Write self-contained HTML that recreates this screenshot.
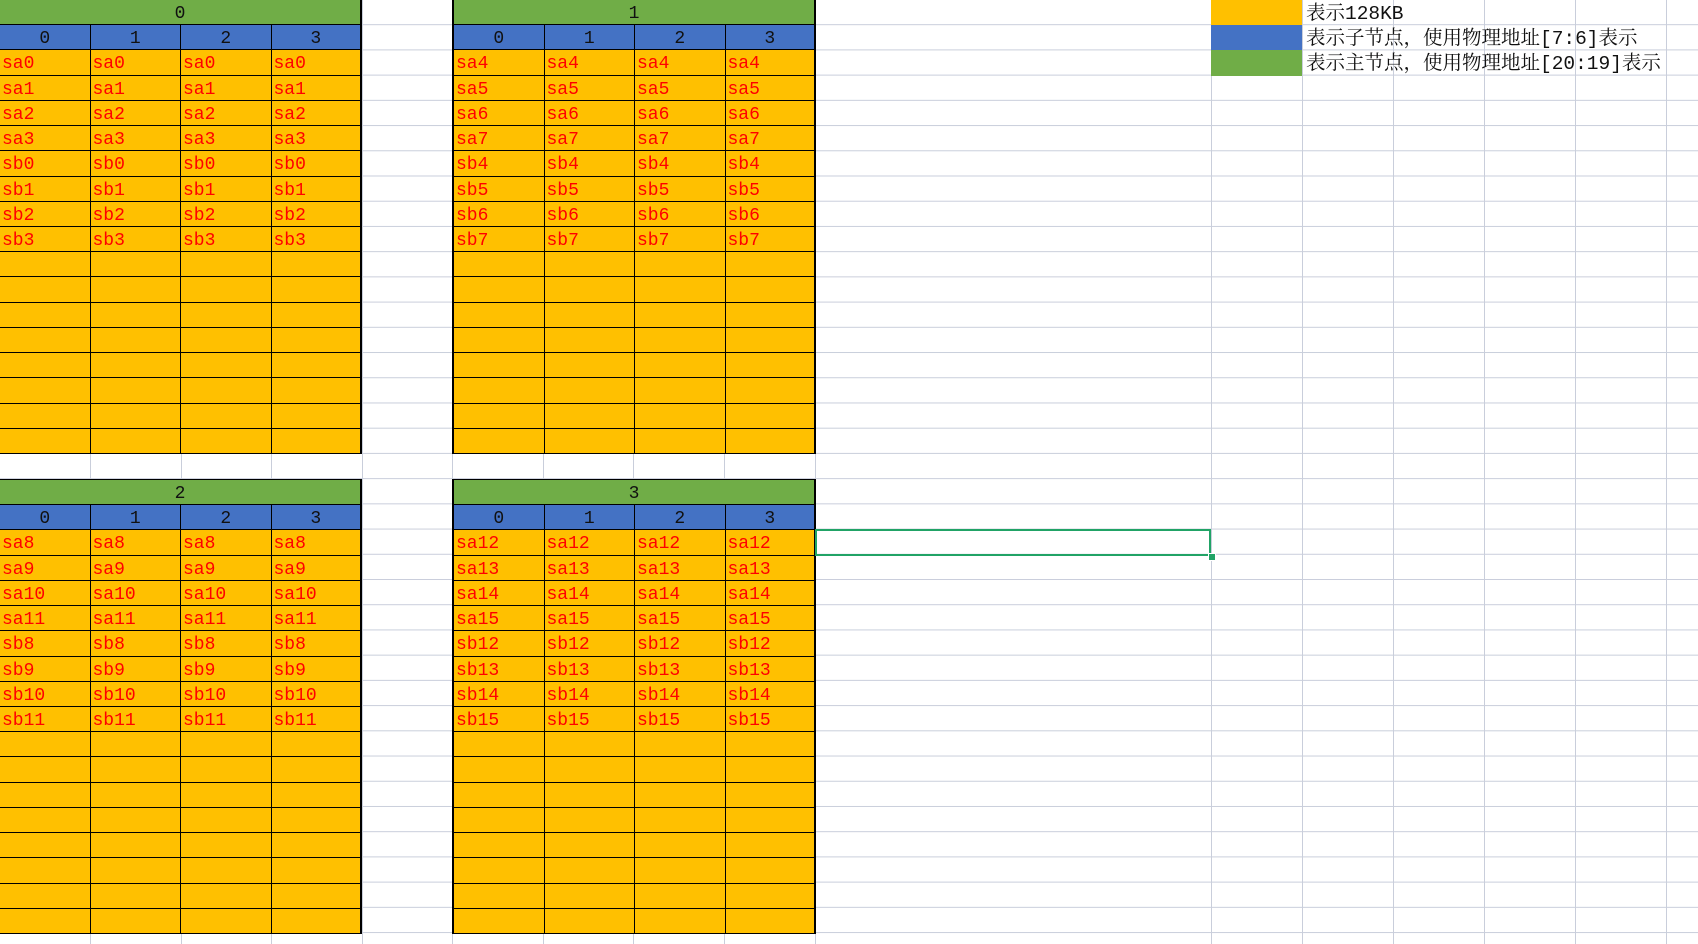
<!DOCTYPE html>
<html><head><meta charset="utf-8"><style>
body{margin:0;width:1698px;height:944px;overflow:hidden;position:relative;background:#fff;
background-image:linear-gradient(to bottom,#c9cedb 1px,transparent 1px);background-size:100% 25.22px;background-position:0 24.2px;
font-family:"Liberation Mono","Noto Serif CJK SC",serif;}
.v{position:absolute;top:0;width:1px;height:944px;background:#c9cedb}
.blk{position:absolute;width:362px;background:#FFC000;box-sizing:border-box;border-right:2px solid #000}
.r{display:grid;grid-template-columns:90.5px 90.5px 90.5px 88.5px;height:25.22px}
.r i{font-style:normal;box-sizing:border-box;border-right:1px solid #000;border-bottom:1px solid #000;color:#f00;font-size:18px;line-height:29px;padding-left:2px;white-space:nowrap;overflow:hidden}
.r i:last-child{border-right:none}
.g{height:25.22px;background:#70AD47;box-sizing:border-box;border-bottom:1px solid #000;text-align:center;font-size:18px;line-height:29px;color:#111}
.b{background:#4472C4}
.b i{color:#111;text-align:center;padding:0;line-height:29px}
.lg{position:absolute;left:1211px;width:91px;height:25.22px}
.lt{position:absolute;left:1306px;font-size:19.5px;line-height:28px;color:#111;white-space:nowrap;font-family:"Liberation Mono","Noto Serif CJK SC",serif}
</style></head><body>
<div class="v" style="left:90px"></div><div class="v" style="left:181px"></div><div class="v" style="left:271px"></div><div class="v" style="left:362px"></div><div class="v" style="left:452px"></div><div class="v" style="left:543px"></div><div class="v" style="left:633px"></div><div class="v" style="left:724px"></div><div class="v" style="left:815px"></div><div class="v" style="left:1211px"></div><div class="v" style="left:1302px"></div><div class="v" style="left:1393px"></div><div class="v" style="left:1484px"></div><div class="v" style="left:1575px"></div><div class="v" style="left:1666px"></div>

<div class="blk" style="left:0;top:0;height:454px">
<div class="g">0</div>
<div class="r b"><i>0</i><i>1</i><i>2</i><i>3</i></div>
<div class="r"><i>sa0</i><i>sa0</i><i>sa0</i><i>sa0</i></div>
<div class="r"><i>sa1</i><i>sa1</i><i>sa1</i><i>sa1</i></div>
<div class="r"><i>sa2</i><i>sa2</i><i>sa2</i><i>sa2</i></div>
<div class="r"><i>sa3</i><i>sa3</i><i>sa3</i><i>sa3</i></div>
<div class="r"><i>sb0</i><i>sb0</i><i>sb0</i><i>sb0</i></div>
<div class="r"><i>sb1</i><i>sb1</i><i>sb1</i><i>sb1</i></div>
<div class="r"><i>sb2</i><i>sb2</i><i>sb2</i><i>sb2</i></div>
<div class="r"><i>sb3</i><i>sb3</i><i>sb3</i><i>sb3</i></div>
<div class="r"><i></i><i></i><i></i><i></i></div><div class="r"><i></i><i></i><i></i><i></i></div><div class="r"><i></i><i></i><i></i><i></i></div><div class="r"><i></i><i></i><i></i><i></i></div><div class="r"><i></i><i></i><i></i><i></i></div><div class="r"><i></i><i></i><i></i><i></i></div><div class="r"><i></i><i></i><i></i><i></i></div><div class="r"><i></i><i></i><i></i><i></i></div>
</div>

<div class="blk" style="left:452px;top:0;height:454px;width:364px;border-left:2px solid #000">
<div class="g">1</div>
<div class="r b"><i>0</i><i>1</i><i>2</i><i>3</i></div>
<div class="r"><i>sa4</i><i>sa4</i><i>sa4</i><i>sa4</i></div>
<div class="r"><i>sa5</i><i>sa5</i><i>sa5</i><i>sa5</i></div>
<div class="r"><i>sa6</i><i>sa6</i><i>sa6</i><i>sa6</i></div>
<div class="r"><i>sa7</i><i>sa7</i><i>sa7</i><i>sa7</i></div>
<div class="r"><i>sb4</i><i>sb4</i><i>sb4</i><i>sb4</i></div>
<div class="r"><i>sb5</i><i>sb5</i><i>sb5</i><i>sb5</i></div>
<div class="r"><i>sb6</i><i>sb6</i><i>sb6</i><i>sb6</i></div>
<div class="r"><i>sb7</i><i>sb7</i><i>sb7</i><i>sb7</i></div>
<div class="r"><i></i><i></i><i></i><i></i></div><div class="r"><i></i><i></i><i></i><i></i></div><div class="r"><i></i><i></i><i></i><i></i></div><div class="r"><i></i><i></i><i></i><i></i></div><div class="r"><i></i><i></i><i></i><i></i></div><div class="r"><i></i><i></i><i></i><i></i></div><div class="r"><i></i><i></i><i></i><i></i></div><div class="r"><i></i><i></i><i></i><i></i></div>
</div>

<div class="blk" style="left:0;top:479px;height:455px;border-top:1px solid #000">
<div class="g">2</div>
<div class="r b"><i>0</i><i>1</i><i>2</i><i>3</i></div>
<div class="r"><i>sa8</i><i>sa8</i><i>sa8</i><i>sa8</i></div>
<div class="r"><i>sa9</i><i>sa9</i><i>sa9</i><i>sa9</i></div>
<div class="r"><i>sa10</i><i>sa10</i><i>sa10</i><i>sa10</i></div>
<div class="r"><i>sa11</i><i>sa11</i><i>sa11</i><i>sa11</i></div>
<div class="r"><i>sb8</i><i>sb8</i><i>sb8</i><i>sb8</i></div>
<div class="r"><i>sb9</i><i>sb9</i><i>sb9</i><i>sb9</i></div>
<div class="r"><i>sb10</i><i>sb10</i><i>sb10</i><i>sb10</i></div>
<div class="r"><i>sb11</i><i>sb11</i><i>sb11</i><i>sb11</i></div>
<div class="r"><i></i><i></i><i></i><i></i></div><div class="r"><i></i><i></i><i></i><i></i></div><div class="r"><i></i><i></i><i></i><i></i></div><div class="r"><i></i><i></i><i></i><i></i></div><div class="r"><i></i><i></i><i></i><i></i></div><div class="r"><i></i><i></i><i></i><i></i></div><div class="r"><i></i><i></i><i></i><i></i></div><div class="r"><i></i><i></i><i></i><i></i></div>
</div>

<div class="blk" style="left:452px;top:479px;height:455px;width:364px;border-left:2px solid #000;border-top:1px solid #000">
<div class="g">3</div>
<div class="r b"><i>0</i><i>1</i><i>2</i><i>3</i></div>
<div class="r"><i>sa12</i><i>sa12</i><i>sa12</i><i>sa12</i></div>
<div class="r"><i>sa13</i><i>sa13</i><i>sa13</i><i>sa13</i></div>
<div class="r"><i>sa14</i><i>sa14</i><i>sa14</i><i>sa14</i></div>
<div class="r"><i>sa15</i><i>sa15</i><i>sa15</i><i>sa15</i></div>
<div class="r"><i>sb12</i><i>sb12</i><i>sb12</i><i>sb12</i></div>
<div class="r"><i>sb13</i><i>sb13</i><i>sb13</i><i>sb13</i></div>
<div class="r"><i>sb14</i><i>sb14</i><i>sb14</i><i>sb14</i></div>
<div class="r"><i>sb15</i><i>sb15</i><i>sb15</i><i>sb15</i></div>
<div class="r"><i></i><i></i><i></i><i></i></div><div class="r"><i></i><i></i><i></i><i></i></div><div class="r"><i></i><i></i><i></i><i></i></div><div class="r"><i></i><i></i><i></i><i></i></div><div class="r"><i></i><i></i><i></i><i></i></div><div class="r"><i></i><i></i><i></i><i></i></div><div class="r"><i></i><i></i><i></i><i></i></div><div class="r"><i></i><i></i><i></i><i></i></div>
</div>

<div style="position:absolute;left:815px;top:529px;width:396px;height:27px;box-sizing:border-box;border:2px solid #21A366"></div>
<div style="position:absolute;left:1208px;top:553px;width:6px;height:6px;background:#21A366;border:1px solid #fff"></div>

<div class="lg" style="top:0;background:#FFC000"></div>
<div class="lg" style="top:25.22px;background:#4472C4"></div>
<div class="lg" style="top:50.44px;background:#70AD47"></div>
<div class="lt" style="top:0">表示128KB</div>
<div class="lt" style="top:25px">表示子节点，使用物理地址[7:6]表示</div>
<div class="lt" style="top:50px">表示主节点，使用物理地址[20:19]表示</div>
</body></html>
